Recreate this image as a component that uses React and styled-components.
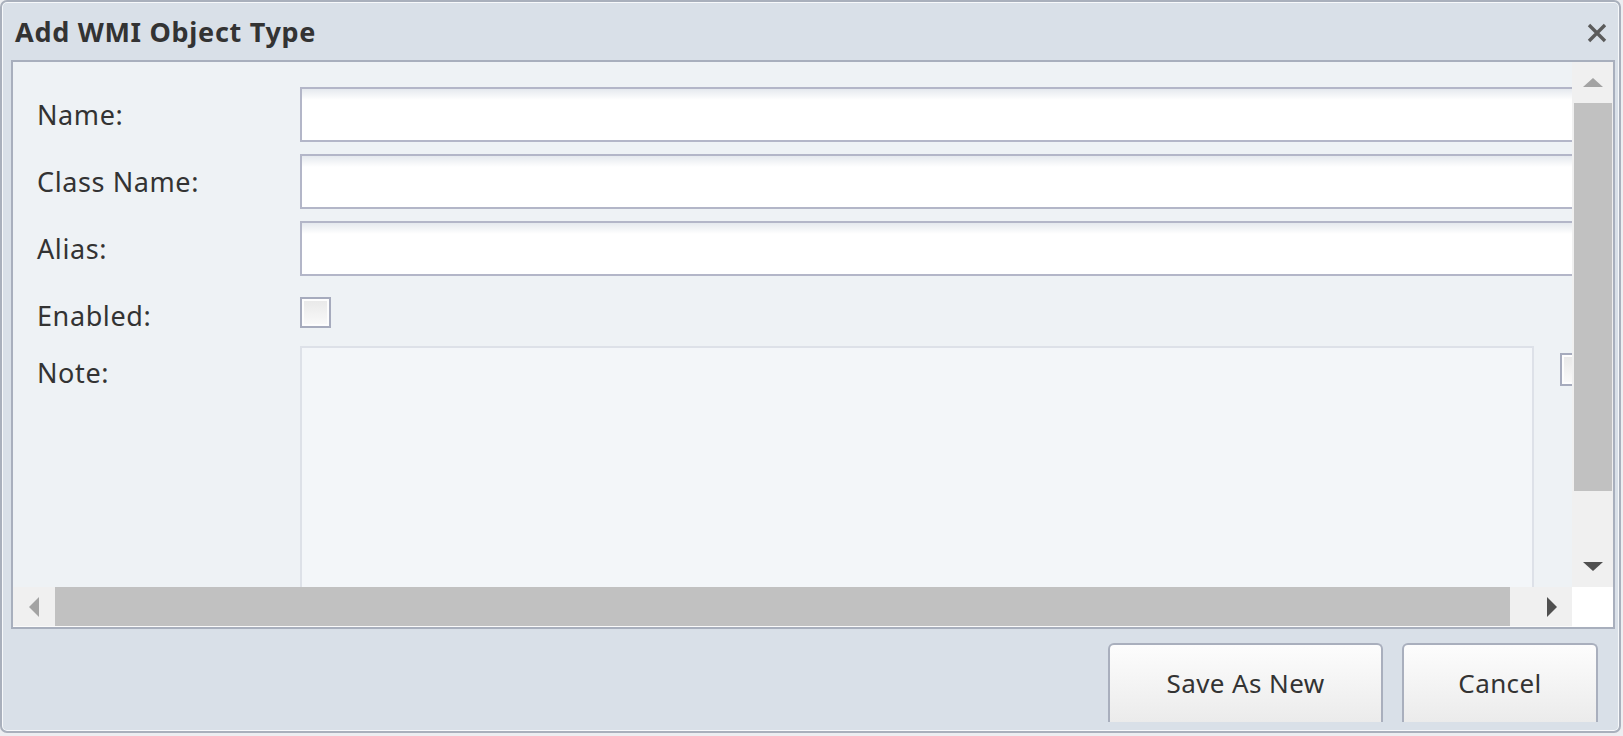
import React from "react";
import styled, { createGlobalStyle } from "styled-components";

const GlobalStyle = createGlobalStyle`
  body {
    margin: 0;
    background: #eceef1;
    font-family: "Noto Sans", "Open Sans", sans-serif;
  }
`;

const Window = styled.div`
  box-sizing: border-box;
  width: 1621px;
  height: 733px;
  border: 2px solid #a9b0bc;
  border-radius: 7px;
  background: #d9e0e8;
  box-shadow: inset 0 0 0 1px #f7f9fb;
  display: flex;
  flex-direction: column;
  overflow: hidden;
`;

const TitleBar = styled.div`
  height: 58px;
  flex-shrink: 0;
  display: flex;
  align-items: center;
  justify-content: space-between;
  padding: 0 12px 0 13px;
`;

const Title = styled.h1`
  margin: 0;
  font-size: 27px;
  font-weight: 700;
  letter-spacing: 0.7px;
  color: #333;
`;

const CloseButton = styled.button`
  border: 0;
  padding: 0;
  background: none;
  width: 20px;
  height: 20px;
  margin-top: 3px;
  cursor: pointer;
  display: flex;
`;

const Panel = styled.div`
  box-sizing: border-box;
  height: 569px;
  margin: 0 4px 0 9px;
  border: 2px solid #a8afbd;
  background: #eef2f5;
  display: grid;
  grid-template-columns: 1fr 41px;
  grid-template-rows: 1fr 40px;
  overflow: hidden;
`;

const Viewport = styled.div`
  overflow: hidden;
  min-width: 0;
  min-height: 0;
`;

const Form = styled.div`
  width: 1650px;
  padding: 25px 0 0 24px;
`;

const Row = styled.div`
  display: flex;
  align-items: ${(p) => (p.$top ? "flex-start" : "center")};
  height: ${(p) => p.$height || "auto"};
  margin-bottom: ${(p) => p.$gap || "12px"};
`;

const Label = styled.label`
  width: 263px;
  flex-shrink: 0;
  font-size: 27px;
  letter-spacing: 0.6px;
  line-height: ${(p) => (p.$top ? "54px" : "normal")};
  padding-top: ${(p) => p.$nudge || "0"};
  color: #333;
`;

const TextInput = styled.input`
  box-sizing: border-box;
  width: 1290px;
  height: 55px;
  border: 2px solid #b3b6c8;
  background: linear-gradient(#e5e9ee 0, #ffffff 11px);
  outline: none;
  padding: 0 10px;
  font-family: inherit;
  font-size: 24px;
`;

const CheckBox = styled.span`
  box-sizing: border-box;
  display: block;
  width: 31px;
  height: 31px;
  border: 2px solid #a6abbd;
  background: linear-gradient(#e8e8e8, #fafafa);
  box-shadow: inset 0 0 0 2px #fdfdfd;
`;

const NoteArea = styled.textarea`
  box-sizing: border-box;
  width: 1234px;
  height: 280px;
  border: 2px solid #dde1e8;
  background: #f3f6f9;
  resize: none;
  outline: none;
  font-family: inherit;
  font-size: 24px;
`;

const SideBox = styled(CheckBox)`
  margin: 7px 0 0 26px;
  height: 33px;
`;

const VScroll = styled.div`
  background: #f0f0f0;
  display: flex;
  flex-direction: column;
`;

const HScroll = styled.div`
  background: #f0f0f0;
  display: flex;
  border-bottom: 1px solid #fbfbfb;
`;

const ArrowCell = styled.div`
  flex-shrink: 0;
  width: ${(p) => p.$w || "auto"};
  height: ${(p) => p.$h || "auto"};
  display: flex;
  align-items: center;
  justify-content: center;
`;

const Arrow = styled.span`
  width: 0;
  height: 0;
  border-style: solid;
  border-color: transparent;
  ${(p) =>
    p.$dir === "up" &&
    `border-width: 0 10px 9px 10px; border-bottom-color: ${p.$color};`}
  ${(p) =>
    p.$dir === "down" &&
    `border-width: 9px 10px 0 10px; border-top-color: ${p.$color};`}
  ${(p) =>
    p.$dir === "left" &&
    `border-width: 10px 10px 10px 0; border-right-color: ${p.$color};`}
  ${(p) =>
    p.$dir === "right" &&
    `border-width: 10px 0 10px 10px; border-left-color: ${p.$color};`}
`;

const VThumb = styled.div`
  height: 388px;
  margin: 0 1px 0 2px;
  background: #c1c1c1;
`;

const HThumb = styled.div`
  width: 1455px;
  background: #c1c1c1;
`;

const Spacer = styled.div`
  flex: 1;
`;

const Corner = styled.div`
  background: #ffffff;
`;

const Footer = styled.div`
  flex: 1;
  display: flex;
  justify-content: flex-end;
  align-items: flex-start;
  gap: 19px;
  padding: 14px 21px 0 0;
`;

const Button = styled.button`
  box-sizing: border-box;
  width: ${(p) => p.$w};
  height: 79px;
  border: 2px solid #a9afbd;
  border-bottom: 0;
  border-radius: 6px 6px 0 0;
  background: linear-gradient(#fdfdfd, #ebebeb);
  font-family: inherit;
  font-size: 26px;
  letter-spacing: 0.4px;
  color: #333;
  padding: 0 0 2px;
  cursor: pointer;
`;

export default function App() {
  return (
    <>
      <GlobalStyle />
      <Window>
        <TitleBar>
          <Title>Add WMI Object Type</Title>
          <CloseButton aria-label="Close">
            <svg width="20" height="20" viewBox="0 0 20 20">
              <path
                d="M2 2 L18 18 M18 2 L2 18"
                stroke="#5b5b5b"
                strokeWidth="3.4"
                fill="none"
              />
            </svg>
          </CloseButton>
        </TitleBar>
        <Panel>
          <Viewport>
            <Form>
              <Row>
                <Label>Name:</Label>
                <TextInput />
              </Row>
              <Row>
                <Label>Class Name:</Label>
                <TextInput />
              </Row>
              <Row>
                <Label>Alias:</Label>
                <TextInput />
              </Row>
              <Row $height="49px" $gap="9px">
                <Label $nudge="5px">Enabled:</Label>
                <CheckBox />
              </Row>
              <Row $top>
                <Label $top>Note:</Label>
                <NoteArea />
                <SideBox />
              </Row>
            </Form>
          </Viewport>
          <VScroll>
            <ArrowCell $h="41px">
              <Arrow $dir="up" $color="#a3a3a3" />
            </ArrowCell>
            <VThumb />
            <Spacer />
            <ArrowCell $h="42px">
              <Arrow $dir="down" $color="#505050" />
            </ArrowCell>
          </VScroll>
          <HScroll>
            <ArrowCell $w="42px">
              <Arrow $dir="left" $color="#a3a3a3" />
            </ArrowCell>
            <HThumb />
            <Spacer />
            <ArrowCell $w="41px">
              <Arrow $dir="right" $color="#505050" />
            </ArrowCell>
          </HScroll>
          <Corner />
        </Panel>
        <Footer>
          <Button $w="275px">Save As New</Button>
          <Button $w="196px">Cancel</Button>
        </Footer>
      </Window>
    </>
  );
}
